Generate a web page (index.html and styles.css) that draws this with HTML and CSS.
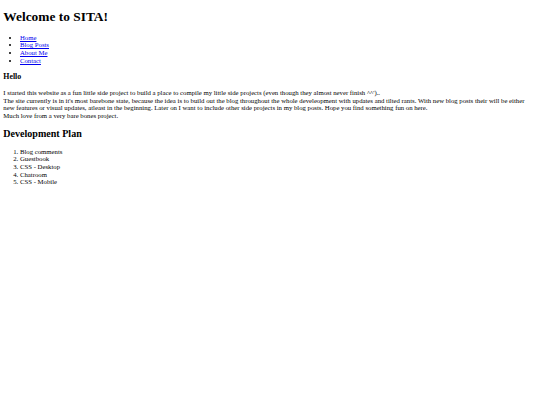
FILE: index.html
```html
<!DOCTYPE html>
<html>
<head>
<meta charset="utf-8">
<title>SITA</title>
<link rel="stylesheet" href="styles.css">
</head>
<body class="page">
<h1 class="title">Welcome to SITA!</h1>
<ul class="nav">
<li><a href="#">Home</a></li>
<li><a href="#">Blog Posts</a></li>
<li><a href="#">About Me</a></li>
<li><a href="#">Contact</a></li>
</ul>
<h3 class="sub">Hello</h3>
<p class="intro">I started this website as a fun little side project to build a place to compile my little side projects (even though they almost never finish ^^')..<br>The site currently is in it's most barebone state, because the idea is to build out the blog throughout the whole develeopment with updates and tilted rants. With new blog posts their will be either new features or visual updates, atleast in the beginning. Later on I want to include other side projects in my blog posts. Hope you find something fun on here.<br>Much love from a very bare bones project.</p>
<h2 class="section">Development Plan</h2>
<ol class="plan">
<li>Blog comments</li>
<li>Guestbook</li>
<li>CSS - Desktop</li>
<li>Chatroom</li>
<li>CSS - Mobile</li>
</ol>
</body>
</html>
```
FILE: styles.css
```css
html { background: #fff; }
.page {
  margin: 3.33px;
  font-family: "Liberation Serif", "Times New Roman", serif;
  font-size: 6.74px;
  line-height: 7.67px;
  color: #000;
}
.title {
  font-size: 13.4px;
  line-height: 15.3px;
  margin: 6px 0 8.93px;
  font-weight: bold;
}
.nav, .plan {
  margin: 6.67px 0;
  padding-left: 16.67px;
}
.nav a { color: #0000ee; }
.sub {
  font-size: 7.85px;
  line-height: 9px;
  margin: 7.8px 0;
  font-weight: bold;
}
.intro { margin: 6.67px 0; }
.section {
  font-size: 10.05px;
  line-height: 11.5px;
  margin: 8.3px 0;
  font-weight: bold;
}
```
